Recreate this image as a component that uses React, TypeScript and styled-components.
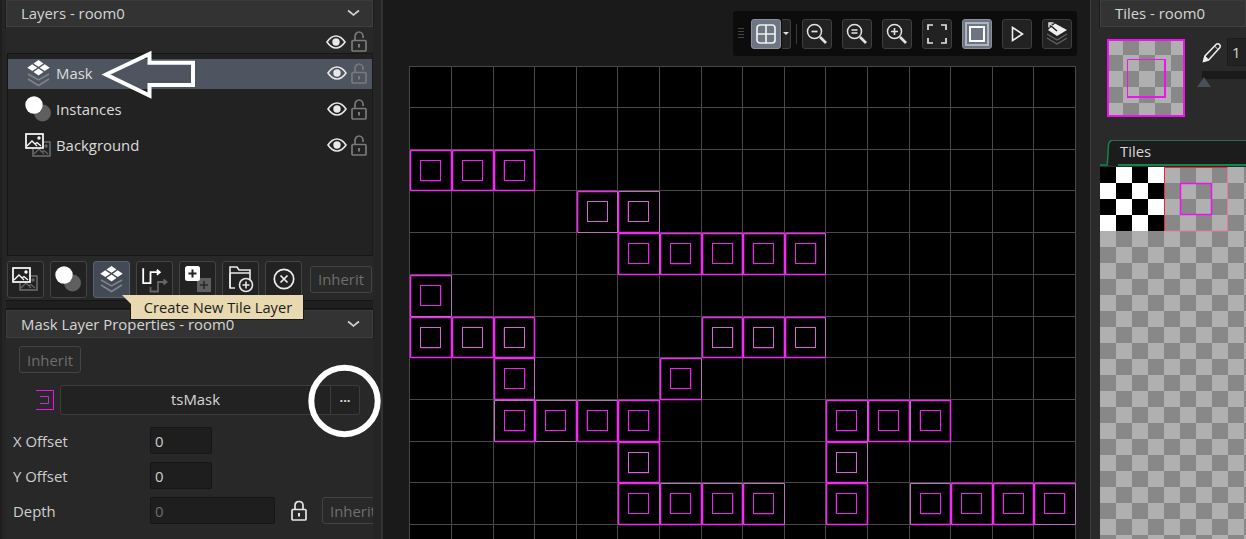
import React from "react";
import styled, { createGlobalStyle } from "styled-components";

const Global = createGlobalStyle`
  html, body { margin: 0; padding: 0; width: 100%; height: 100%; overflow: hidden; background: #1a1a1a; }
  #root { width: 1246px; height: 539px; overflow: hidden; }
  * { box-sizing: border-box; }
`;

const Page = styled.div`
  position: relative;
  display: flex;
  width: 1246px;
  height: 539px;
  overflow: hidden;
  font-family: "Open Sans", "Noto Sans", sans-serif;
  font-size: 14.9px;
  color: #d8d8d8;
  background: #1a1a1a;
`;

/* ---------- left dock ---------- */
const LeftDock = styled.aside`
  flex: 0 0 383px;
  height: 539px;
  padding-left: 6px;
  padding-right: 8px;
  background: #252525;
  border-right: 2px solid #333;
  display: flex;
  flex-direction: column;
  overflow: hidden;
  box-shadow: inset 2px 0 0 #1e1e1e;
`;
const PanelHeader = styled.div<{ $h: number }>`
  flex: 0 0 ${(p) => p.$h}px;
  display: flex;
  align-items: center;
  justify-content: space-between;
  padding: 0 12px 1px 14px;
  background: #333;
  border: 1px solid #3f3f3f;
  border-top-color: #3a3a3a;
  outline: 1px solid #1c1c1c;
  color: #d6d6d6;
  font-size: 14.9px;
  white-space: nowrap;
`;
const EyeRow = styled.div`
  flex: 0 0 26px;
  display: flex;
  align-items: center;
  justify-content: flex-end;
  gap: 5px;
  padding: 3px 6px 0 0;
  background: #282828;
`;
const LayerList = styled.div`
  flex: 0 0 203px;
  margin-left: 1px;
  padding-top: 5px;
  background: #222;
  border: 1px solid #161616;
  border-right-color: #1a1a1a;
  display: flex;
  flex-direction: column;
`;
const LayerRow = styled.div<{ $active?: boolean; $h: number }>`
  flex: 0 0 ${(p) => p.$h}px;
  display: flex;
  align-items: center;
  gap: 4px;
  padding: 0 5px ${(p) => (p.$active ? 2 : 0)}px 17px;
  background: ${(p) => (p.$active ? "#4e5560" : "transparent")};
  color: #dcdcdc;
`;
const LayerIconSlot = styled.span`
  flex: 0 0 27px;
  display: flex;
  align-items: center;
  justify-content: center;
`;
const LayerName = styled.span`
  flex: 1;
`;
const LayerToolbar = styled.div`
  flex: 0 0 44px;
  display: flex;
  align-items: center;
  gap: 6px;
  padding: 2px 0 0 1px;
  background: #282828;
`;
const ToolButton = styled.button<{ $active?: boolean }>`
  flex: 0 0 37px;
  height: 37px;
  padding: 0;
  display: flex;
  align-items: center;
  justify-content: center;
  border-radius: 3px;
  border: 1px solid ${(p) => (p.$active ? "#5a6270" : "#444")};
  background: ${(p) => (p.$active ? "#444a55" : "#222")};
`;
const GhostButton = styled.button<{ $w: number; $ml?: number }>`
  flex: 0 0 ${(p) => p.$w}px;
  width: ${(p) => p.$w}px;
  height: 27px;
  margin-left: ${(p) => p.$ml ?? 0}px;
  padding: 0;
  border: 1px solid #444;
  border-radius: 3px;
  background: #292929;
  color: #6e6e6e;
  font: inherit;
  font-size: 14.9px;
  text-align: center;
  white-space: nowrap;
`;
const Splitter = styled.div`
  flex: 0 0 9px;
  margin-bottom: 1px;
  background: #1f1f1f;
  border-top: 1px solid #151515;
  border-bottom: 1px solid #151515;
`;
const Props = styled.div`
  flex: 1;
  background: #282828;
  padding: 8px 0 0 7px;
  display: flex;
  flex-direction: column;
  overflow: hidden;
`;
const InheritLine = styled.div`
  flex: 0 0 27px;
  padding-left: 6px;
`;
const SpriteLine = styled.div`
  display: flex;
  align-items: center;
  margin-top: 12px;
  padding-left: 23px;
  height: 30px;
`;
const SpriteName = styled.div`
  flex: 0 0 271px;
  height: 30px;
  margin-left: 6px;
  padding-bottom: 2px;
  display: flex;
  align-items: center;
  justify-content: center;
  background: #222;
  border: 1px solid #3c3c3c;
  border-radius: 3px 0 0 3px;
  color: #d6d6d6;
`;
const DotsButton = styled.div`
  flex: 0 0 29px;
  height: 30px;
  display: flex;
  align-items: center;
  justify-content: center;
  background: #222;
  border: 1px solid #3c3c3c;
  border-left: none;
  border-radius: 0 3px 3px 0;
  color: #ddd;
  font-size: 13px;
  font-weight: 700;
  line-height: 1;
`;
const FieldLine = styled.div<{ $mt: number }>`
  display: flex;
  align-items: center;
  margin-top: ${(p) => p.$mt}px;
  height: 27px;
`;
const FieldLabel = styled.label`
  flex: 0 0 137px;
  color: #cfcfcf;
`;
const NumberBox = styled.div<{ $w: number; $muted?: boolean }>`
  flex: 0 0 ${(p) => p.$w}px;
  height: 27px;
  display: flex;
  align-items: center;
  padding-left: 4px;
  background: #1e1e1e;
  border: 1px solid #161616;
  border-radius: 2px;
  color: ${(p) => (p.$muted ? "#6e6e6e" : "#cfcfcf")};
`;
const LockSlot = styled.span`
  flex: 0 0 47px;
  display: flex;
  justify-content: center;
`;
const Tooltip = styled.div`
  position: absolute;
  left: 130px;
  top: 295px;
  width: 174px;
  height: 25px;
  padding-left: 2px;
  display: flex;
  align-items: center;
  justify-content: center;
  background: #e8d9b0;
  border: 1px solid #1a1a1a;
  border-top: none;
  color: #1c1c1c;
  font-size: 14.7px;
  &::before {
    content: "";
    position: absolute;
    left: -9px;
    top: 0;
    border-top: 9px solid #e8d9b0;
    border-left: 9px solid transparent;
  }
`;
const Overlay = styled.svg`
  position: absolute;
  left: 0;
  top: 0;
  pointer-events: none;
`;

/* ---------- canvas ---------- */
const CanvasArea = styled.main`
  flex: 0 0 707px;
  height: 539px;
  background: #1a1a1a;
  display: flex;
  flex-direction: column;
  overflow: hidden;
`;
const ToolbarRow = styled.div`
  flex: 0 0 66px;
  display: flex;
  justify-content: flex-end;
  align-items: flex-start;
  padding: 11px 13px 0 0;
`;
const Toolbar = styled.div`
  width: 344px;
  height: 45px;
  display: flex;
  align-items: center;
  padding-left: 5px;
  background: #0c0c0c;
  border-radius: 3px;
`;
const Grip = styled.span`
  flex: 0 0 6px;
  height: 11px;
  margin-right: 7px;
  background: repeating-linear-gradient(to bottom, #444 0 1px, transparent 1px 3px);
`;
const RoomButton = styled.button<{ $active?: boolean; $mr?: number }>`
  flex: 0 0 30px;
  width: 30px;
  height: 30px;
  margin-right: ${(p) => p.$mr ?? 10}px;
  padding: 0;
  display: flex;
  align-items: center;
  justify-content: center;
  border-radius: 3px;
  border: 1px solid ${(p) => (p.$active ? "#8a909c" : "#3e3e3e")};
  background: ${(p) => (p.$active ? "#6d7482" : "#222")};
`;
const CaretButton = styled.span`
  flex: 0 0 9px;
  height: 30px;
  margin: 0 5px 0 1px;
  display: flex;
  align-items: center;
  justify-content: center;
  background: #222;
  border: 1px solid #3e3e3e;
  border-left: none;
  border-radius: 0 3px 3px 0;
  &::before {
    content: "";
    border-top: 3px solid #ddd;
    border-left: 3px solid transparent;
    border-right: 3px solid transparent;
  }
`;
const ToolSep = styled.span`
  flex: 0 0 1px;
  height: 20px;
  margin-right: 5px;
  background: #3a3a3a;
`;
const RoomSvg = styled.svg`
  display: block;
  margin-left: 26px;
  flex: none;
`;

/* ---------- right dock ---------- */
const RightDock = styled.aside`
  flex: 1;
  height: 539px;
  display: flex;
  flex-direction: column;
  padding-left: 9px;
  background: #2a2a2a;
  border-left: 1px solid #3c3c3c;
  overflow: hidden;
`;
const RightBody = styled.div`
  flex: 0 0 113px;
  display: flex;
  padding: 12px 0 0 7px;
  background: #2a2a2a;
`;
const PreviewSvg = styled.svg`
  flex: none;
`;
const BrushColumn = styled.div`
  margin: -1px 0 0 17px;
  width: 70px;
  flex: none;
  display: flex;
  flex-direction: column;
`;
const BrushTop = styled.div`
  display: flex;
  align-items: center;
  gap: 5px;
  height: 28px;
`;
const BrushInput = styled.div`
  flex: 1;
  height: 28px;
  padding-left: 4px;
  display: flex;
  align-items: center;
  background: #222;
  border: 1px solid #1c1c1c;
  border-radius: 2px 0 0 2px;
`;
const SliderTrack = styled.div`
  position: relative;
  margin-top: 5px;
  height: 8px;
  background: #1a1a1a;
  &::after {
    content: "";
    position: absolute;
    left: -5px;
    top: 6px;
    border-bottom: 10px solid #4a4f58;
    border-left: 7px solid transparent;
    border-right: 7px solid transparent;
  }
`;
const TabStrip = styled.div`
  flex: 0 0 26px;
  display: flex;
  background: #2a2a2a;
`;
const TabCurve = styled.svg`
  flex: none;
`;
const TabLabel = styled.div`
  position: relative;
  flex: 1;
  height: 26px;
  padding: 0 0 5px 8px;
  display: flex;
  align-items: center;
  background: #1c1c1c;
  border-top: 1px solid #2a6a4c;
  color: #d8d8d8;
  &::after {
    content: "";
    position: absolute;
    left: 6px;
    right: 0;
    bottom: 0;
    height: 2px;
    background: #12854e;
  }
`;
const TileSheet = styled.svg`
  display: block;
  flex: none;
  margin-top: 1px;
`;
const GlyphSvg = styled.svg`
  flex: none;
`;

/* ---------- drawings ---------- */
const Eye = () => (
  <svg width="20" height="14" viewBox="0 0 20 14">
    <path d="M1 7C4 2.600 7 1 10 1s6 1.600 9 6c-3 4.400-6 6-9 6s-6-1.600-9-6z" fill="none" stroke="#e8e8e8" strokeWidth="1.600" />
    <circle cx="10" cy="7" r="3.700" fill="#e8e8e8" />
  </svg>
);
const Lock = ({ open = true, color = "#7a7a7a" }: { open?: boolean; color?: string }) => (
  <svg width="16" height="21" viewBox="0 0 16 21">
    <rect x="1" y="9.500" width="14" height="10.500" rx="1" fill="none" stroke={color} strokeWidth="1.700" />
    <path d={open ? "M4 9V5.500C4 3 5.800 1 8 1s4 2 4 4.500v1.500" : "M4 9V5.500C4 3 5.800 1.500 8 1.500s4 1.500 4 4V9"} fill="none" stroke={color} strokeWidth="1.700" />
    <rect x="7" y="13" width="2" height="3.500" fill={color} />
  </svg>
);
const Chevron = () => (
  <svg width="13" height="8" viewBox="0 0 13 8">
    <path d="M1 1.500C3 3 5 4.500 6.500 6 8 4.500 10 3 12 1.500" fill="none" stroke="#d0d0d0" strokeWidth="1.700" />
  </svg>
);
const StackIcon = () => (
  <svg width="23" height="27" viewBox="0 0 23 27">
    <path d="M1 14l10.500 6 10.500-6M1 19l10.500 6.500 10.500-6.500" fill="none" stroke="#80838a" strokeWidth="1.500" />
    <path d="M11.500 0l5 3.400-5 3.400-5-3.400zM5.300 4.300l5 3.400-5 3.400L.3 7.700zM17.700 4.300l5 3.400-5 3.400-5-3.400zM11.500 8.600l5 3.400-5 3.400-5-3.400z" fill="#fff" />
  </svg>
);
const CirclesIcon = () => (
  <svg width="27" height="26" viewBox="0 0 27 26">
    <circle cx="17.500" cy="17" r="8.500" fill="#5f5f5f" />
    <circle cx="9" cy="9" r="8.700" fill="#fff" />
  </svg>
);
const Picture = ({ c }: { c: string }) => (
  <>
    <rect x="1" y="1" width="17" height="14" fill="#0000" stroke={c} strokeWidth="1.700" />
    <path d="M2 13l5-5 5 5M10 11l2-1.500 4 3.500" fill="none" stroke={c} strokeWidth="1.300" />
    <circle cx="14" cy="5" r="1.700" fill={c} />
  </>
);
const PictureIcon = () => (
  <svg width="27" height="25" viewBox="0 0 27 25">
    <g transform="translate(7 8)"><Picture c="#666" /></g>
    <rect x="0" y="0" width="19" height="16" fill="#222" />
    <Picture c="#fff" />
  </svg>
);
const PathIcon = () => (
  <svg width="28" height="30" viewBox="0 0 28 30">
    <path d="M9.500 23v4.500H17V18h8.500M22.500 15.500l3 2.500-3 2.500" fill="none" stroke="#666" strokeWidth="1.800" />
    <path d="M2.200 4.200v15H9.500V8.200h9.300M15.800 5.700l3 2.500-3 2.500" fill="none" stroke="#fff" strokeWidth="1.800" />
  </svg>
);
const AddTileIcon = () => (
  <svg width="28" height="28" viewBox="0 0 28 28">
    <rect x="13" y="13" width="14" height="14" fill="#5f5f5f" />
    <path d="M20 16v8M16 20h8" stroke="#2a2a2a" strokeWidth="1.600" />
    <rect x="1" y="1" width="15" height="15" rx="2.500" fill="#fff" />
    <path d="M8.500 4.500v8M4.500 8.500h8" stroke="#222" strokeWidth="2" />
  </svg>
);
const FolderPlus = () => (
  <svg width="26" height="28" viewBox="0 0 26 28">
    <path d="M7 23H2V2h7l2 3h11v10" fill="none" stroke="#e8e8e8" strokeWidth="1.600" />
    <path d="M2 8h20M2 23l0-15" fill="none" stroke="#e8e8e8" strokeWidth="1.600" />
    <circle cx="18" cy="20" r="6.500" fill="#222" stroke="#e8e8e8" strokeWidth="1.600" />
    <path d="M18 16.500v7M14.500 20h7" stroke="#e8e8e8" strokeWidth="1.600" />
  </svg>
);
const XCircle = () => (
  <svg width="22" height="22" viewBox="0 0 22 22">
    <circle cx="11" cy="11" r="9.700" fill="none" stroke="#eee" strokeWidth="1.700" />
    <path d="M7.500 7.500l7 7M14.500 7.500l-7 7" stroke="#eee" strokeWidth="1.700" />
  </svg>
);
const SpriteGlyph = () => (
  <GlyphSvg width="18" height="20" viewBox="0 0 18 20">
    <path d="M0 .5h17.500v19H0" fill="none" stroke="#f010f0" strokeWidth="1" />
    <path d="M4 6.500h8.500v7H4" fill="none" stroke="#c030c0" strokeWidth="1" />
  </GlyphSvg>
);
const Magnifier = ({ inner }: { inner: React.ReactNode }) => (
  <svg width="22" height="22" viewBox="0 0 22 22">
    <circle cx="8.500" cy="8.500" r="7" fill="none" stroke="#e4e4e4" strokeWidth="1.500" />
    <path d="M14 14l6 6" stroke="#e4e4e4" strokeWidth="2.600" />
    {inner}
  </svg>
);
const GridIcon = () => (
  <svg width="20" height="20" viewBox="0 0 20 20">
    <rect x="1" y="1" width="18" height="18" rx="3" fill="none" stroke="#eee" strokeWidth="1.700" />
    <path d="M10 1v18M1 10h18" stroke="#eee" strokeWidth="1.700" />
  </svg>
);
const CornersIcon = () => (
  <svg width="20" height="20" viewBox="0 0 20 20">
    <path d="M1 6V1h5M14 1h5v5M19 14v5h-5M6 19H1v-5" fill="none" stroke="#e4e4e4" strokeWidth="1.700" />
  </svg>
);
const FrameIcon = () => (
  <svg width="24" height="24" viewBox="0 0 24 24">
    <rect x="1" y="1" width="22" height="22" fill="none" stroke="#aeb4c0" strokeWidth="2" />
    <rect x="5" y="5" width="14" height="14" fill="none" stroke="#fff" strokeWidth="2" />
  </svg>
);
const PlayIcon = () => (
  <svg width="13" height="16" viewBox="0 0 13 16">
    <path d="M1.500 1.500L11.500 8 1.500 14.500z" fill="none" stroke="#eee" strokeWidth="1.600" />
  </svg>
);
const StackArrow = () => (
  <svg width="22" height="23" viewBox="0 0 22 23">
    <path d="M1 12l10 6 10-6M1 16l10 6 10-6" fill="none" stroke="#666" strokeWidth="1.200" />
    <path d="M9 1.500l12 6.500-10 6L2 8z" fill="#eee" />
    <path d="M3 1l6 5.500M3 5.500V1h4.500" fill="none" stroke="#ddd" strokeWidth="1.500" />
    <path d="M5 4l6 5" fill="none" stroke="#111" strokeWidth="1.200" />
  </svg>
);
const PencilIcon = () => (
  <GlyphSvg width="20" height="21" viewBox="0 0 20 21">
    <path d="M1.500 19.500l1.500-5.500L14 2.500c1-1 2.500-1 3.500 0s1 2.500 0 3.500L6.500 18z" fill="none" stroke="#eee" strokeWidth="1.500" />
    <path d="M1.500 19.500l1.500-5.500 3.500 4zM12.500 4l3.500 3.500" fill="#eee" stroke="#eee" strokeWidth="1" />
  </GlyphSvg>
);
const Checks = ({ x, y, cols, rows, a, b, size = 16 }: { x: number; y: number; cols: number; rows: number; a: string; b: string; size?: number }) => (
  <>
    {Array.from({ length: rows * cols }, (_, i) => {
      const c = i % cols;
      const r = Math.floor(i / cols);
      return <rect key={i} x={x + c * size} y={y + r * size} width={size} height={size} fill={(c + r) % 2 ? b : a} />;
    })}
  </>
);

/* ---------- room data ---------- */
const XS = [409, 451, 493, 534, 576, 617, 659, 701, 742, 784, 825, 867, 909, 950, 992, 1033, 1075];
const YS = [66, 107, 149, 190, 232, 274, 316, 357, 399, 441, 482, 524, 566];
const TILES: [number, number, string?][] = [
  [0, 2], [1, 2], [2, 2],
  [4, 3, "br"], [5, 3, "tr"],
  [5, 4, "r"], [6, 4], [7, 4], [8, 4], [9, 4, "r"],
  [0, 5, "rb"],
  [0, 6], [1, 6], [2, 6], [7, 6], [8, 6], [9, 6, "r"],
  [2, 7, "r"], [6, 7, "r"],
  [2, 8, "tl"], [3, 8, "tb"], [4, 8, "t"], [5, 8], [10, 8, "r"], [11, 8], [12, 8, "l"],
  [5, 9], [10, 9, "r"],
  [5, 10, "r"], [6, 10, "t"], [7, 10, "t"], [8, 10, "tr"], [10, 10], [12, 10, "tl"], [13, 10], [14, 10], [15, 10, "rb"],
];

const BRIGHT = "#f02cf0";
const DIM = "#b874b8";
const SHADE = "#7a107a";

const Tile = ({ c, r, dim = "" }: { c: number; r: number; dim?: string }) => {
  const x0 = XS[c] + 1.5;
  const y0 = YS[r] + 1.5;
  const x1 = XS[c + 1] + 0.5;
  const y1 = YS[r + 1] + 0.5;
  const side = (k: string) => ({
    stroke: dim.includes(k) ? DIM : BRIGHT,
    strokeWidth: dim.includes(k) ? 1 : 1.6,
    fill: "none",
  });
  const ix = XS[c] + 11.5;
  const iy = YS[r] + 11.5;
  const shade = (c + r) % 4;
  const ring = (c * 3 + r) % 3 === 0 ? "#d860d8" : "#f020f0";
  return (
    <g>
      {shade === 0 && <rect x={ix - 1} y={iy} width={1} height={20} fill={SHADE} />}
      {shade === 1 && <rect x={ix + 20} y={iy} width={1} height={20} fill={SHADE} />}
      {shade === 2 && <rect x={ix} y={iy + 20} width={20} height={1} fill={SHADE} />}
      <rect x={ix} y={iy} width={20} height={20} fill="none" stroke={ring} strokeWidth="1" />
      <path d={`M${x0} ${y0}H${x1}`} {...side("t")} />
      <path d={`M${x1} ${y0}V${y1}`} {...side("r")} />
      <path d={`M${x1} ${y1}H${x0}`} {...side("b")} />
      <path d={`M${x0} ${y1}V${y0}`} {...side("l")} />
    </g>
  );
};

const Room = () => (
  <RoomSvg width={681} height={473} viewBox="409 66 681 473">
    <rect x={409} y={66} width={667} height={473} fill="#000" />
    {XS.map((x) => <rect key={x} x={x} y={66} width={1} height={473} fill="#484848" />)}
    {YS.slice(0, 12).map((y) => <rect key={y} x={409} y={y} width={667} height={1} fill="#484848" />)}
    {TILES.map(([c, r, dim]) => <Tile key={`${c}-${r}`} c={c} r={r} dim={dim} />)}
  </RoomSvg>
);

export default function App() {
  return (
    <Page>
      <Global />
      <LeftDock>
        <PanelHeader $h={27}>
          <span>Layers - room0</span>
          <Chevron />
        </PanelHeader>
        <EyeRow><Eye /><Lock /></EyeRow>
        <LayerList>
          <LayerRow $active $h={30}>
            <LayerIconSlot><StackIcon /></LayerIconSlot>
            <LayerName>Mask</LayerName>
            <Eye /><Lock />
          </LayerRow>
          <LayerRow $h={40}>
            <LayerIconSlot><CirclesIcon /></LayerIconSlot>
            <LayerName>Instances</LayerName>
            <Eye /><Lock />
          </LayerRow>
          <LayerRow $h={32}>
            <LayerIconSlot><PictureIcon /></LayerIconSlot>
            <LayerName>Background</LayerName>
            <Eye /><Lock />
          </LayerRow>
        </LayerList>
        <LayerToolbar>
          <ToolButton><PictureIcon /></ToolButton>
          <ToolButton><CirclesIcon /></ToolButton>
          <ToolButton $active><StackIcon /></ToolButton>
          <ToolButton><PathIcon /></ToolButton>
          <ToolButton><AddTileIcon /></ToolButton>
          <ToolButton><FolderPlus /></ToolButton>
          <ToolButton><XCircle /></ToolButton>
          <GhostButton $w={62} $ml={2}>Inherit</GhostButton>
        </LayerToolbar>
        <Splitter />
        <PanelHeader $h={28}>
          <span>Mask Layer Properties - room0</span>
          <Chevron />
        </PanelHeader>
        <Props>
          <InheritLine><GhostButton $w={62}>Inherit</GhostButton></InheritLine>
          <SpriteLine>
            <SpriteGlyph />
            <SpriteName>tsMask</SpriteName>
            <DotsButton>···</DotsButton>
          </SpriteLine>
          <FieldLine $mt={12}>
            <FieldLabel>X Offset</FieldLabel>
            <NumberBox $w={62}>0</NumberBox>
          </FieldLine>
          <FieldLine $mt={8}>
            <FieldLabel>Y Offset</FieldLabel>
            <NumberBox $w={62}>0</NumberBox>
          </FieldLine>
          <FieldLine $mt={8}>
            <FieldLabel>Depth</FieldLabel>
            <NumberBox $w={125} $muted>0</NumberBox>
            <LockSlot><Lock open={false} color="#e6e6e6" /></LockSlot>
            <GhostButton $w={62}>Inherit</GhostButton>
          </FieldLine>
        </Props>
      </LeftDock>

      <CanvasArea>
        <ToolbarRow>
          <Toolbar>
            <Grip />
            <RoomButton $active $mr={0}><GridIcon /></RoomButton>
            <CaretButton />
            <ToolSep />
            <RoomButton><Magnifier inner={<path d="M5.500 8.500h6" stroke="#e4e4e4" strokeWidth="1.700" />} /></RoomButton>
            <RoomButton><Magnifier inner={<path d="M5.500 7h6M5.500 10h6" stroke="#e4e4e4" strokeWidth="1.500" />} /></RoomButton>
            <RoomButton><Magnifier inner={<path d="M5 8.500h7M8.500 5v7" stroke="#e4e4e4" strokeWidth="1.600" />} /></RoomButton>
            <RoomButton><CornersIcon /></RoomButton>
            <RoomButton $active><FrameIcon /></RoomButton>
            <RoomButton><PlayIcon /></RoomButton>
            <RoomButton $mr={0}><StackArrow /></RoomButton>
          </Toolbar>
        </ToolbarRow>
        <Room />
      </CanvasArea>

      <RightDock>
        <PanelHeader $h={27}>
          <span>Tiles - room0</span>
        </PanelHeader>
        <RightBody>
          <PreviewSvg width="78" height="78" viewBox="0 0 78 78">
            <Checks x={0} y={0} cols={5} rows={5} a="#b0b0b0" b="#888" />
            <rect x="1" y="1" width="76" height="76" fill="none" stroke="#f010f0" strokeWidth="2" />
            <path d="M58 58.500H20.500V20.500H58" fill="none" stroke="#f010f0" strokeWidth="1" />
            <path d="M58 20v38.500M20 58h39" fill="none" stroke="#f010f0" strokeWidth="2" />
          </PreviewSvg>
          <BrushColumn>
            <BrushTop>
              <PencilIcon />
              <BrushInput>1</BrushInput>
            </BrushTop>
            <SliderTrack />
          </BrushColumn>
        </RightBody>
        <TabStrip>
          <TabCurve width="12" height="26" viewBox="0 0 12 26">
            <path d="M12 1C10 1 9 2 8.500 5 8 11 8 20 7 25H12z" fill="#1c1c1c" />
            <path d="M12 .5C10 .5 9 2 8.500 5 8 11 8 20 7 25H0" fill="none" stroke="#12854e" strokeWidth="1.500" />
          </TabCurve>
          <TabLabel>Tiles</TabLabel>
        </TabStrip>
        <TileSheet width="146" height="372" viewBox="0 0 146 372">
          <Checks x={0} y={0} cols={10} rows={24} a="#b0b0b0" b="#888" />
          <Checks x={0} y={0} cols={4} rows={4} a="#000" b="#fff" />
          <path d="M64.500 64V.5h63" fill="none" stroke="#f02040" strokeWidth="1" />
          <path d="M127.500 .5v63.500H64.500" fill="none" stroke="#e87a9a" strokeWidth="1" />
          <rect x="80.500" y="16.500" width="31" height="31" fill="none" stroke="#f010f0" strokeWidth="1.500" />
        </TileSheet>
      </RightDock>

      <Tooltip>Create New Tile Layer</Tooltip>
      <Overlay width="1246" height="539" viewBox="0 0 1246 539">
        <path d="M106 74.500L149.500 54v8.700H193V85h-43.500v10.500z" fill="none" stroke="#fff" strokeWidth="4" strokeLinejoin="miter" />
        <circle cx="344.500" cy="401" r="33.200" fill="none" stroke="#fff" strokeWidth="6" />
      </Overlay>
    </Page>
  );
}
